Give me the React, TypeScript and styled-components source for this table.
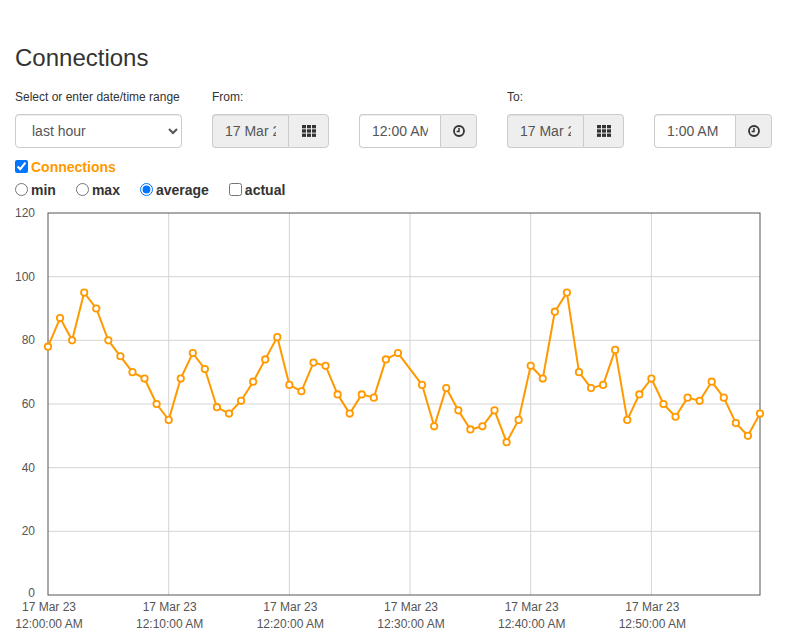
import React, { useState } from 'react';
import styled, { createGlobalStyle } from 'styled-components';

const GlobalStyle = createGlobalStyle`
  html, body {
    margin: 0;
    padding: 0;
    background: #fff;
  }
  body {
    font-family: 'Liberation Sans', Arial, sans-serif;
    font-size: 14px;
    color: #333;
  }
`;

const Page = styled.div`
  padding: 45px 0 0 15px;
  width: 772px;
  box-sizing: border-box;
`;

const Title = styled.h3`
  margin: 0;
  font-size: 24px;
  font-weight: 500;
  line-height: 26px;
  color: #333;
`;

const Controls = styled.div`
  display: flex;
  gap: 30px;
  margin-top: 18px;
`;

const Field = styled.div<{ $w: number }>`
  width: ${(p) => p.$w}px;
  display: flex;
  flex-direction: column;
`;

const Label = styled.label`
  font-size: 12px;
  line-height: 17px;
  height: 17px;
  margin-bottom: 8px;
  color: #333;
`;

const Select = styled.select`
  height: 34px;
  width: 100%;
  border: 1px solid #ccc;
  border-radius: 4px;
  background: #fff;
  color: #555;
  font-family: 'Liberation Sans', Arial, sans-serif;
  font-size: 14px;
  padding: 0 8px 0 12px;
  box-shadow: inset 0 1px 1px rgba(0, 0, 0, 0.075);
`;

const Group = styled.div`
  display: flex;
  height: 34px;
`;

const GroupInput = styled.input<{ $w: number; $grey?: boolean }>`
  width: ${(p) => p.$w}px;
  box-sizing: border-box;
  height: 34px;
  border: 1px solid #ccc;
  border-right: none;
  border-radius: 4px 0 0 4px;
  background: ${(p) => (p.$grey ? '#eee' : '#fff')};
  color: #555;
  font-family: 'Liberation Sans', Arial, sans-serif;
  font-size: 14px;
  padding: 0 12px;
  opacity: 1;
  box-shadow: inset 0 1px 1px rgba(0, 0, 0, 0.075);
`;

const AddonButton = styled.button<{ $w: number }>`
  width: ${(p) => p.$w}px;
  height: 34px;
  box-sizing: border-box;
  border: 1px solid #ccc;
  border-radius: 0 4px 4px 0;
  background: #eee;
  display: flex;
  align-items: center;
  justify-content: center;
  padding: 0;
  color: #333;
`;

const Row = styled.div<{ $top?: number }>`
  display: flex;
  align-items: center;
  height: 23px;
  margin-top: ${(p) => p.$top ?? 0}px;
`;

const Choice = styled.label<{ $orange?: boolean }>`
  display: flex;
  align-items: center;
  font-weight: bold;
  font-size: 14px;
  margin-right: 20px;
  color: ${(p) => (p.$orange ? '#ff9900' : '#333')};
  input {
    margin: 0 3px 0 0;
    width: 13px;
    height: 13px;
  }
`;

const ChartWrap = styled.div`
  margin-left: -15px;
  height: 433px;
  svg {
    display: block;
  }
`;

const CalendarIcon = () => (
  <svg width="14" height="12" viewBox="0 0 14 12">
    {[0, 1, 2].map((r) =>
      [0, 1, 2].map((c) => (
        <rect key={`${r}${c}`} x={c * 5} y={r * 4.3} width="4" height="3.3" fill="#333" />
      ))
    )}
  </svg>
);

const ClockIcon = () => (
  <svg width="14" height="14" viewBox="0 0 14 14">
    <circle cx="7" cy="7" r="5" fill="none" stroke="#333" strokeWidth="1.8" />
    <path d="M7 4 V7.4 H4.6" fill="none" stroke="#333" strokeWidth="1.5" />
  </svg>
);

const values: (number | null)[] = [
  78, 87, 80, 95, 90, 80, 75, 70, 68, 60,
  55, 68, 76, 71, 59, 57, 61, 67, 74, 81,
  66, 64, 73, 72, 63, 57, 63, 62, 74, 76,
  null, 66, 53, 65, 58, 52, 53, 58, 48, 55,
  72, 68, 89, 95, 70, 65, 66, 77, 55, 63,
  68, 60, 56, 62, 61, 67, 62, 54, 50, 57,
];

const X0 = 48;
const X1 = 760;
const Y0 = 12;
const Y1 = 394;
const xOf = (i: number) => X0 + (i * (X1 - X0)) / 59;
const yOf = (v: number) => Y1 - (v * (Y1 - Y0)) / 120;

const Chart = () => {
  const pts = values
    .map((v, i) => (v === null ? null : [xOf(i), yOf(v)]))
    .filter((p): p is number[] => p !== null);
  const line = pts.map((p, i) => `${i ? 'L' : 'M'}${p[0].toFixed(1)} ${p[1].toFixed(1)}`).join(' ');
  const times = ['12:00:00 AM', '12:10:00 AM', '12:20:00 AM', '12:30:00 AM', '12:40:00 AM', '12:50:00 AM'];
  return (
    <svg width="787" height="433" fontFamily="'Liberation Sans', Arial, sans-serif">
      {[20, 40, 60, 80, 100].map((v) => (
        <line key={v} x1={X0} x2={X1} y1={yOf(v)} y2={yOf(v)} stroke="#d4d4d4" strokeWidth="1" />
      ))}
      {[10, 20, 30, 40, 50].map((i) => (
        <line key={i} x1={xOf(i)} x2={xOf(i)} y1={Y0} y2={Y1} stroke="#d4d4d4" strokeWidth="1" />
      ))}
      <rect x={X0} y={Y0} width={X1 - X0} height={Y1 - Y0} fill="none" stroke="#555" strokeWidth="1" />
      {[0, 20, 40, 60, 80, 100, 120].map((v) => (
        <text key={v} x="35" y={yOf(v) + (v === 0 ? 2 : 4)} fontSize="12" fill="#555" textAnchor="end">
          {v}
        </text>
      ))}
      {times.map((t, k) => (
        <g key={t} fontSize="12" fill="#555" textAnchor="middle">
          <text x={xOf(k * 10) + 1} y="410">17 Mar 23</text>
          <text x={xOf(k * 10) + 1} y="427">{t}</text>
        </g>
      ))}
      <path d={line} fill="none" stroke="#ff9900" strokeWidth="2" strokeLinejoin="round" />
      {pts.map((p, i) => (
        <circle key={i} cx={p[0]} cy={p[1]} r="3.2" fill="#fff" stroke="#ff9900" strokeWidth="1.8" />
      ))}
    </svg>
  );
};

const App: React.FC = () => {
  const [mode, setMode] = useState('average');
  const [showConn, setShowConn] = useState(true);
  const [actual, setActual] = useState(false);

  return (
    <>
      <GlobalStyle />
      <Page>
        <Title>Connections</Title>
        <Controls>
          <Field $w={167}>
            <Label>Select or enter date/time range</Label>
            <Select defaultValue="last hour">
              <option>last hour</option>
              <option>last day</option>
              <option>last week</option>
            </Select>
          </Field>
          <Field $w={117}>
            <Label>From:</Label>
            <Group>
              <GroupInput $w={76} $grey disabled defaultValue="17 Mar 2023" />
              <AddonButton $w={41}>
                <CalendarIcon />
              </AddonButton>
            </Group>
          </Field>
          <Field $w={118}>
            <Label>&nbsp;</Label>
            <Group>
              <GroupInput $w={81} defaultValue="12:00 AM" />
              <AddonButton $w={37}>
                <ClockIcon />
              </AddonButton>
            </Group>
          </Field>
          <Field $w={117}>
            <Label>To:</Label>
            <Group>
              <GroupInput $w={76} $grey disabled defaultValue="17 Mar 2023" />
              <AddonButton $w={41}>
                <CalendarIcon />
              </AddonButton>
            </Group>
          </Field>
          <Field $w={118}>
            <Label>&nbsp;</Label>
            <Group>
              <GroupInput $w={81} defaultValue="1:00 AM" />
              <AddonButton $w={37}>
                <ClockIcon />
              </AddonButton>
            </Group>
          </Field>
        </Controls>
        <Row $top={7}>
          <Choice $orange>
            <input type="checkbox" checked={showConn} onChange={(e) => setShowConn(e.target.checked)} />
            Connections
          </Choice>
        </Row>
        <Row>
          {['min', 'max', 'average'].map((m) => (
            <Choice key={m}>
              <input type="radio" name="mode" checked={mode === m} onChange={() => setMode(m)} />
              {m}
            </Choice>
          ))}
          <Choice>
            <input type="checkbox" checked={actual} onChange={(e) => setActual(e.target.checked)} />
            actual
          </Choice>
        </Row>
        <ChartWrap>
          <Chart />
        </ChartWrap>
      </Page>
    </>
  );
};

export default App;
